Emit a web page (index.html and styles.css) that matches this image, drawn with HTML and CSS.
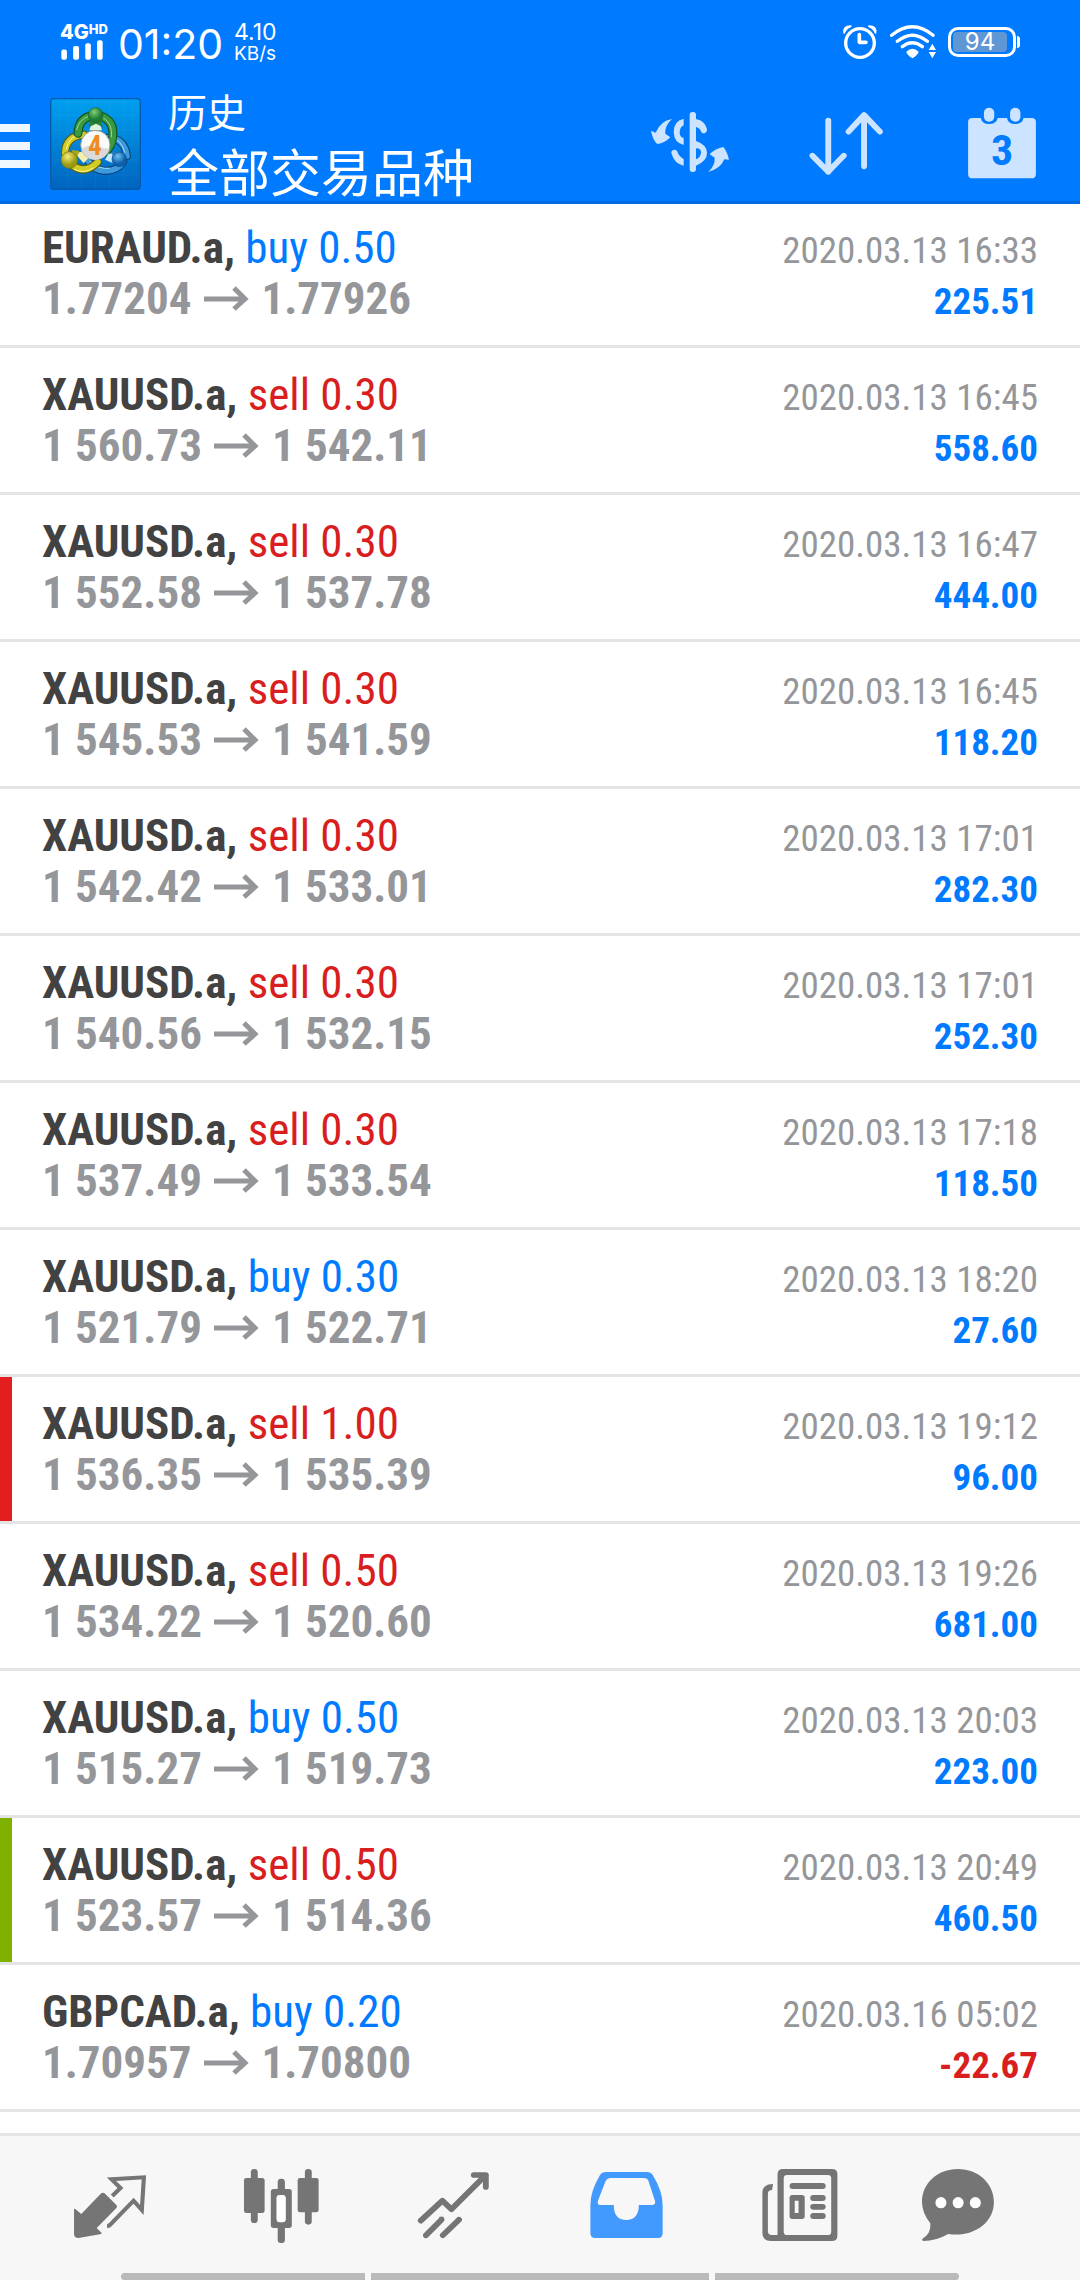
FILE: index.html
```html
<!DOCTYPE html>
<html lang="zh-CN">
<head>
<meta charset="utf-8">
<meta name="viewport" content="width=device-width, initial-scale=1">
<title>历史</title>
<link rel="stylesheet" href="styles.css">
</head>
<body>
<header class="header">
  <div class="status">
    <div class="signal">
      <div class="network">4G<sup class="hd">HD</sup></div>
      <svg class="bars" viewBox="30 66 132 61" fill="#fff" aria-hidden="true"><rect x="33" y="95" width="17" height="31" rx="6"/><rect x="69" y="84" width="18" height="42" rx="6"/><rect x="106" y="76" width="17" height="50" rx="6"/><rect x="142" y="67" width="17" height="59" rx="6"/></svg>
    </div>
    <time class="clock">01:20</time>
    <div class="rate"><span class="rate-value">4.10</span><span class="rate-unit">KB/s</span></div>
    <div class="status-right">
      <svg width="36" height="37" viewBox="336 9 108 111" fill="none" stroke="#fff" aria-hidden="true"><circle cx="390" cy="69" r="43" stroke-width="10"/><path d="M388 44v23h20" stroke-width="11" stroke-linecap="round" stroke-linejoin="round"/><path d="M340 40q-4-24 22-24q5 1 2 5q-13 5-19 18q-2 6-5 1zM439 40q4-24-22-24q-5 1-2 5q13 5 19 18q2 6 5 1z" fill="#fff" stroke="none"/></svg>
      <svg width="48" height="37" viewBox="477 9 144 111" fill="none" stroke="#fff" stroke-width="10" stroke-linecap="round" aria-hidden="true"><path d="M485 46q62-51 124 0M502 64q45-37 90 0M517 80q30-23 60 0"/><path d="M529 95q18-18 37 0q-2 10-19 20q-16-10-18-20z" fill="#fff" stroke="none"/><path d="M596 90l11-19 11 19zM596 96l11 19 11-19z" fill="#fff" stroke="none"/></svg>
      <div class="battery"><span class="battery-level">94</span></div>
    </div>
  </div>
  <div class="toolbar">
    <button class="menu" aria-label="菜单"><span></span><span></span><span></span></button>
    <svg class="logo" viewBox="30 24 273 276" aria-hidden="true">
      <defs>
        <linearGradient id="bg" x1="0" y1="0" x2="0" y2="1"><stop offset="0" stop-color="#00a0f0"/><stop offset="1" stop-color="#0064be"/></linearGradient>
        <radialGradient id="gr" cx=".4" cy=".3"><stop offset="0" stop-color="#7fce74"/><stop offset="1" stop-color="#1d7d34"/></radialGradient>
        <radialGradient id="ye" cx=".4" cy=".3"><stop offset="0" stop-color="#f4ef7a"/><stop offset="1" stop-color="#9c9a13"/></radialGradient>
        <radialGradient id="bl" cx=".4" cy=".3"><stop offset="0" stop-color="#6cc3f0"/><stop offset="1" stop-color="#0d5fab"/></radialGradient>
      </defs>
      <rect x="32" y="26" width="269" height="272" rx="10" fill="url(#bg)" stroke="#0759ac" stroke-width="4"/>
      <path d="M83 28v268M125 28v268M167 28v268M209 28v268M251 28v268M34 75h265M34 120h265M34 165h265M34 210h265M34 255h265" stroke="#fff" stroke-opacity=".07" stroke-width="2"/>
      <g fill="none" stroke-linecap="round">
        <path d="M204 143q50 2 57 55M136 198q20 44 62 45q36-2 52-28" stroke="#08447f" stroke-width="24"/>
        <path d="M204 143q50 2 57 55M136 198q20 44 62 45q36-2 52-28" stroke="#3d9bdd" stroke-width="17"/>
        <path d="M208 137q38 13 46 50M150 214q25 24 58 21" stroke="#a5dbfa" stroke-width="3"/>
        <path d="M132 134q-56 4-57 57M95 225q42 30 78-9" stroke="#5b6212" stroke-width="25"/>
        <path d="M132 134q-56 4-57 57M95 225q42 30 78-9" stroke="#d2cc26" stroke-width="18"/>
        <path d="M127 132q-42 5-48 45M104 239q30 14 55-5" stroke="#fbf7a0" stroke-width="3"/>
        <path d="M114 130q2-44 39-52M181 78q43 13 37 65q-4 27-22 43" stroke="#135322" stroke-width="27"/>
        <path d="M114 130q2-44 39-52M181 78q43 13 37 65q-4 27-22 43" stroke="#3a9a40" stroke-width="20"/>
        <path d="M110 119q6-30 35-40M191 84q28 18 23 57" stroke="#a2d992" stroke-width="3"/>
      </g>
      <path d="M157 93h20l9 28h-38z" fill="#dff4dc"/><path d="M105 190l28-7 13 20-15 17z" fill="#f4efab"/><path d="M229 190l-24 1-10 18 28 12z" fill="#c5e8fb"/>
      <path d="M150 88h34l4 23-20-10-22 11z" fill="#278437"/><path d="M97 180l21 3-12 33-18-1z" fill="#aba71c"/><path d="M235 185l-19 1 4 33 20 5z" fill="#267dbc"/>
      <circle cx="167" cy="75" r="22" fill="url(#gr)" stroke="#17602a" stroke-width="2"/>
      <circle cx="88" cy="210" r="25" fill="url(#ye)" stroke="#6e700f" stroke-width="2"/>
      <circle cx="238" cy="208" r="22" fill="url(#bl)" stroke="#0c4f8d" stroke-width="2"/>
      <circle cx="166" cy="165" r="44" fill="#fafafa" stroke="#9a9690" stroke-width="3"/>
      <path d="M124 176a43 43 0 0 0 84 0q-20 0-35-8t-49 8z" fill="#dadada"/>
      <text class="logo-text" x="165" y="194" text-anchor="middle">4</text>
    </svg>
    <h1 class="titles"><span class="title">历史</span><span class="subtitle">全部交易品种</span></h1>
    <button class="tool" aria-label="交易品种"><svg class="icon" viewBox="6 -18 288 288" fill="#cce4ff"><rect x="149" y="36" width="19" height="180" rx="9"/><path d="M131 56v20q-11 5-12 20t12 18v21q-29-7-30-39t30-40zM131 177v20q-28-6-36-35a9 9 0 0 1 17-7q4 13 19 22zM168 57q28 5 33 31a10 10 0 0 1-17 9q-4-13-16-16zM168 123q32 11 33 35t-33 39v-19q13-5 15-19t-15-14z"/><path d="M96 57q-22 19-20 44l15 11q-16 17-39 20Q38 119 33 92l14 6q14-35 49-41zM204 216q22-19 20-43l-15-10q17-18 41-22 12 15 17 38l-14-1q-12 29-49 38z"/></svg></button>
    <button class="tool" aria-label="排序"><svg class="icon" viewBox="749 282 279 288" preserveAspectRatio="none" fill="none" stroke="#cce4ff" stroke-width="17" stroke-linecap="round" stroke-linejoin="round"><path d="M837 362v153M791 467l46 48 45-48M941 499V345M896 395l45-50 46 50"/></svg></button>
    <button class="tool" aria-label="日期"><svg class="icon" viewBox="1202 282 279 288" preserveAspectRatio="none"><path d="M1255 354h25q3 18 24 18t25-18h27q3 18 24 18t24-18h24q12 0 12 12v155q0 14-12 14h-173q-12 0-12-14V366q0-12 12-12z" fill="#cce4ff"/><rect x="1289" y="323" width="30" height="42" rx="15" fill="#cce4ff"/><rect x="1365" y="323" width="30" height="42" rx="15" fill="#cce4ff"/><text class="day" x="1342" y="496" text-anchor="middle">3</text></svg></button>
  </div>
</header>

<svg class="defs" aria-hidden="true"><symbol id="to" viewBox="0 0 46 25"><path d="M0 13h41M30 2l11 11-11 10" fill="none" stroke="#95969a" stroke-width="5"/></symbol></svg>

<main class="deals">
  <article class="deal"><div><h2 class="symbol">EURAUD.a, <span class="buy">buy 0.50</span></h2><p class="price">1.77204<svg class="to"><use href="#to"/></svg>1.77926</p></div><div class="side"><time class="date">2020.03.13 16:33</time><p class="profit">225.51</p></div></article>
  <article class="deal"><div><h2 class="symbol">XAUUSD.a, <span class="sell">sell 0.30</span></h2><p class="price">1 560.73<svg class="to"><use href="#to"/></svg>1 542.11</p></div><div class="side"><time class="date">2020.03.13 16:45</time><p class="profit">558.60</p></div></article>
  <article class="deal"><div><h2 class="symbol">XAUUSD.a, <span class="sell">sell 0.30</span></h2><p class="price">1 552.58<svg class="to"><use href="#to"/></svg>1 537.78</p></div><div class="side"><time class="date">2020.03.13 16:47</time><p class="profit">444.00</p></div></article>
  <article class="deal"><div><h2 class="symbol">XAUUSD.a, <span class="sell">sell 0.30</span></h2><p class="price">1 545.53<svg class="to"><use href="#to"/></svg>1 541.59</p></div><div class="side"><time class="date">2020.03.13 16:45</time><p class="profit">118.20</p></div></article>
  <article class="deal"><div><h2 class="symbol">XAUUSD.a, <span class="sell">sell 0.30</span></h2><p class="price">1 542.42<svg class="to"><use href="#to"/></svg>1 533.01</p></div><div class="side"><time class="date">2020.03.13 17:01</time><p class="profit">282.30</p></div></article>
  <article class="deal"><div><h2 class="symbol">XAUUSD.a, <span class="sell">sell 0.30</span></h2><p class="price">1 540.56<svg class="to"><use href="#to"/></svg>1 532.15</p></div><div class="side"><time class="date">2020.03.13 17:01</time><p class="profit">252.30</p></div></article>
  <article class="deal"><div><h2 class="symbol">XAUUSD.a, <span class="sell">sell 0.30</span></h2><p class="price">1 537.49<svg class="to"><use href="#to"/></svg>1 533.54</p></div><div class="side"><time class="date">2020.03.13 17:18</time><p class="profit">118.50</p></div></article>
  <article class="deal"><div><h2 class="symbol">XAUUSD.a, <span class="buy">buy 0.30</span></h2><p class="price">1 521.79<svg class="to"><use href="#to"/></svg>1 522.71</p></div><div class="side"><time class="date">2020.03.13 18:20</time><p class="profit">27.60</p></div></article>
  <article class="deal stop-loss"><div><h2 class="symbol">XAUUSD.a, <span class="sell">sell 1.00</span></h2><p class="price">1 536.35<svg class="to"><use href="#to"/></svg>1 535.39</p></div><div class="side"><time class="date">2020.03.13 19:12</time><p class="profit">96.00</p></div></article>
  <article class="deal"><div><h2 class="symbol">XAUUSD.a, <span class="sell">sell 0.50</span></h2><p class="price">1 534.22<svg class="to"><use href="#to"/></svg>1 520.60</p></div><div class="side"><time class="date">2020.03.13 19:26</time><p class="profit">681.00</p></div></article>
  <article class="deal"><div><h2 class="symbol">XAUUSD.a, <span class="buy">buy 0.50</span></h2><p class="price">1 515.27<svg class="to"><use href="#to"/></svg>1 519.73</p></div><div class="side"><time class="date">2020.03.13 20:03</time><p class="profit">223.00</p></div></article>
  <article class="deal take-profit"><div><h2 class="symbol">XAUUSD.a, <span class="sell">sell 0.50</span></h2><p class="price">1 523.57<svg class="to"><use href="#to"/></svg>1 514.36</p></div><div class="side"><time class="date">2020.03.13 20:49</time><p class="profit">460.50</p></div></article>
  <article class="deal"><div><h2 class="symbol">GBPCAD.a, <span class="buy">buy 0.20</span></h2><p class="price">1.70957<svg class="to"><use href="#to"/></svg>1.70800</p></div><div class="side"><time class="date">2020.03.16 05:02</time><p class="profit loss">-22.67</p></div></article>
</main>

<footer class="footer">
  <nav class="tabs">
    <button class="tab" aria-label="行情"><svg class="icon" viewBox="180 240 279 288" preserveAspectRatio="none"><path d="M215 386q4 0 7 4l14 12 56-60q7-7 14 0l32 33q4 5 0 9l-57 60 15 16q-2 3-6 3l-62 11q-13 0-13-11z" fill="#757575"/><path d="M326 348l24-24-26-26 94-6-6 98-24-28-69 73q-3 3-8 3" fill="none" stroke="#757575" stroke-width="12"/></svg></button>
    <button class="tab" aria-label="图表"><svg class="icon" viewBox="680 240 279 288" preserveAspectRatio="none" fill="#757575"><rect x="709" y="294" width="60" height="105" rx="7"/><rect x="729" y="267" width="20" height="162" rx="10"/><rect x="865" y="294" width="61" height="103" rx="7"/><rect x="886" y="267" width="20" height="167" rx="10"/><rect x="807" y="296" width="21" height="50" rx="10"/><rect x="807" y="427" width="21" height="62" rx="9"/><path fill-rule="evenodd" d="M795 327h45q8 0 8 8v101q0 8-8 8h-45q-8 0-8-8V335q0-8 8-8zM813 345q-9 0-9 9v63q0 10 9 10h8q9 0 9-10v-63q0-9-9-9z"/><rect x="804" y="345" width="26" height="82" rx="10" fill="#fff"/></svg></button>
    <button class="tab" aria-label="交易"><svg class="icon" viewBox="1179 240 279 288" preserveAspectRatio="none" fill="none" stroke="#757575" stroke-width="17" stroke-linecap="round" stroke-linejoin="round"><path d="M1222 422l63-60 26 26 100-103h-35M1411 285v36M1237 466l45-47M1286 466l47-47"/><path d="M1276 413l12 0M1327 414l13 4" stroke-width="6" stroke-linecap="butt"/></svg></button>
    <button class="tab" aria-label="历史" aria-current="page"><svg class="icon" viewBox="110 240 279 288" preserveAspectRatio="none"><path fill="#429aff" fill-rule="evenodd" d="M191 276h119q12 0 17 9 29 48 29 91v84q0 14-13 14H160q-14 0-14-14v-84q0-43 28-91 6-9 17-9zM205 294q-10 0-15 10l-22 58q-3 13 7 13h39q0 45 36 45t37-45h40q9-1 7-11l-19-60q-3-10-14-10z"/></svg></button>
    <button class="tab" aria-label="新闻"><svg class="icon" viewBox="610 240 279 288" preserveAspectRatio="none" fill="#757575"><path fill-rule="evenodd" d="M706 267h142q16 0 16 16v184q0 16-16 16H671q-25 0-25-25V338q0-26 31-26l-3 18q-12 0-12 12v111q0 12 11 12h17V283q0-16 16-16zM718 285q-10 0-10 10v160q0 10 10 10h118q10 0 10-10V295q0-10-10-10z"/><rect x="725" y="309" width="105" height="18" rx="9"/><path fill-rule="evenodd" d="M733 345h28q8 0 8 8v56q0 8-8 8h-28q-8 0-8-8v-56q0-8 8-8zM740 362v37h11v-37z"/><rect x="785" y="345" width="45" height="18" rx="9"/><rect x="785" y="372" width="45" height="17" rx="9"/><rect x="785" y="399" width="45" height="18" rx="9"/></svg></button>
    <button class="tab" aria-label="邮箱"><svg class="icon" viewBox="1109 240 279 288" preserveAspectRatio="none"><path d="M1213 267c60 0 105 44 105 99 0 64-61 107-133 96q-35 21-72 21-8-3 0-9 23-14 20-44-24-32-24-64c0-57 46-99 104-99z" fill="#757575"/><ellipse cx="1164" cy="368" rx="16" ry="17" fill="#fff"/><ellipse cx="1214" cy="368" rx="16" ry="17" fill="#fff"/><ellipse cx="1264" cy="368" rx="16" ry="17" fill="#fff"/></svg></button>
  </nav>
  <div class="handles"><span></span><span></span><span></span></div>
</footer>
</body>
</html>
```
FILE: styles.css
```css
* { box-sizing: border-box; }

body {
  margin: 0;
  min-height: 100vh;
  display: flex;
  flex-direction: column;
  background: #fff;
  font-family: "Roboto Condensed", Roboto, "Noto Sans CJK SC", sans-serif;
}

button {
  margin: 0;
  padding: 0;
  border: 0;
  background: none;
}

h1, h2, p { margin: 0; }
svg { display: block; }
.defs { position: absolute; width: 0; height: 0; }
.icon { width: 96px; height: 96px; }

/* Header */
.header {
  background: #007aff;
  border-bottom: 3px solid #006be0;
  color: #fff;
}

.status {
  display: flex;
  align-items: center;
  height: 83px;
  padding: 0 60px;
  font-family: Inter, Roboto, sans-serif;
}

.signal { width: 58px; }

.network {
  display: flex;
  align-items: flex-start;
  height: 17px;
  font: 800 20px/18px Inter, sans-serif;
}

.hd { font-size: 13px; line-height: 13px; }
.bars { width: 44px; height: 20px; }
.clock { width: 116px; font-size: 41px; line-height: 50px; padding-top: 4px; }
.rate { display: flex; flex-direction: column; line-height: 21px; padding-top: 3px; }
.rate-value { font-size: 23px; }
.rate-unit { font-size: 19px; }

.status-right {
  display: flex;
  align-items: center;
  gap: 11px;
  margin-left: auto;
}

.battery {
  position: relative;
  width: 68px;
  height: 30px;
  margin-right: 4px;
  padding: 2px 6px 2px 2px;
  border: 3px solid #fff;
  border-radius: 10px;
}

.battery::after {
  content: "";
  position: absolute;
  right: -7px;
  top: 6px;
  width: 3px;
  height: 12px;
  border-radius: 0 3px 3px 0;
  background: #fff;
}

.battery-level {
  display: block;
  height: 20px;
  border-radius: 4px;
  background: #5f97d5;
  font-size: 24px;
  line-height: 20px;
  text-align: center;
}

.toolbar {
  display: flex;
  align-items: center;
  height: 118px;
}

.menu {
  display: flex;
  flex-direction: column;
  gap: 10px;
  width: 50px;
  padding-top: 8px;
}

.menu span { width: 30px; height: 8px; background: #eef6ff; }
.logo { width: 91px; height: 92px; margin-top: 4px; }
.logo-text { font: 700 82px "Roboto Condensed", Roboto, sans-serif; fill: #f08b24; }

.titles {
  display: flex;
  flex-direction: column;
  flex: 1;
  padding-left: 27px;
  font-family: "Noto Sans CJK SC", sans-serif;
  font-weight: 400;
  white-space: nowrap;
}

.title { font-size: 39px; line-height: 56px; }
.subtitle { font-size: 51px; line-height: 64px; }

.tool {
  display: flex;
  justify-content: center;
  width: 156px;
}

.day { font: 700 128px "Roboto Condensed", Roboto, sans-serif; fill: #007aff; }

/* Deals */
.deals { flex: 1; }

.deal {
  display: flex;
  justify-content: space-between;
  height: 147px;
  padding: 20px 42px 0;
  border-bottom: 3px solid #e4e4e4;
}

.deal:first-child { height: 144px; padding-top: 17px; }

.stop-loss { box-shadow: inset 12px 0 #e31e1e; }
.take-profit { box-shadow: inset 12px 0 #80b000; }

.symbol, .price {
  font-size: 45px;
  font-weight: 700;
  line-height: 51px;
  white-space: nowrap;
}

.symbol { padding-top: 1px; color: #424242; }
.symbol span { font-weight: 400; }
.buy { color: #007aff; }
.sell { color: #d81e1e; }

.price {
  display: flex;
  align-items: center;
  gap: 12px;
  color: #95969a;
}

.to { width: 46px; height: 25px; }

.side {
  padding-top: 4px;
  font-size: 37px;
  line-height: 51px;
  text-align: right;
}

.date { color: #95969a; }
.profit { font-weight: 700; color: #007aff; }
.loss { color: #d81e1e; }

/* Bottom tabs */
.footer {
  position: relative;
  height: 147px;
  border-top: 3px solid #e4e4e4;
  background: #f7f7f7;
}

.tabs {
  display: flex;
  padding: 24px 24px 0;
}

.tab {
  display: flex;
  justify-content: center;
  flex: 1;
}

.handles {
  position: absolute;
  bottom: 0;
  left: 0;
  right: 0;
  display: flex;
  gap: 6px;
  padding: 0 121px;
}

.handles span { flex: 244; height: 7px; background: #bababa; }
.handles span:first-child { border-radius: 4px 0 0 4px; }
.handles span:nth-child(2) { flex-grow: 338; }
.handles span:last-child { border-radius: 0 4px 4px 0; }
```
